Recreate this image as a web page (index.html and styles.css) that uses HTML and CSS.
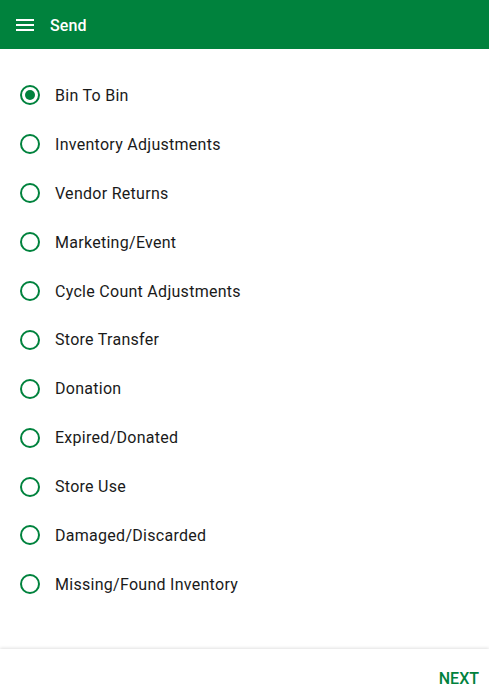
FILE: index.html
```html
<!DOCTYPE html>
<html>
  <head>
    <title>Send</title>
    <link rel="stylesheet" href="styles.css">
  </head>
  <body>
    <header class="toolbar">
      <svg class="menu_icon" width="18" height="12" viewBox="0 0 18 12">
        <rect x="0" y="0" width="18" height="2" fill="#fff"/>
        <rect x="0" y="5" width="18" height="2" fill="#fff"/>
        <rect x="0" y="10" width="18" height="2" fill="#fff"/>
      </svg>
      <span class="toolbar_title">Send</span>
    </header>

    <ul class="reasons">
      <li class="reason checked"><span class="radio"></span>Bin To Bin</li>
      <li class="reason"><span class="radio"></span>Inventory Adjustments</li>
      <li class="reason"><span class="radio"></span>Vendor Returns</li>
      <li class="reason"><span class="radio"></span>Marketing/Event</li>
      <li class="reason"><span class="radio"></span>Cycle Count Adjustments</li>
      <li class="reason"><span class="radio"></span>Store Transfer</li>
      <li class="reason"><span class="radio"></span>Donation</li>
      <li class="reason"><span class="radio"></span>Expired/Donated</li>
      <li class="reason"><span class="radio"></span>Store Use</li>
      <li class="reason"><span class="radio"></span>Damaged/Discarded</li>
      <li class="reason"><span class="radio"></span>Missing/Found Inventory</li>
    </ul>

    <footer class="bottom_bar">
      <button class="next_btn">Next</button>
    </footer>
  </body>
</html>
```

FILE: styles.css
```css
body { margin: 0; font-family: Roboto, "Noto Sans", sans-serif; background: #fff; height: 699px; position: relative; overflow: hidden; }

.toolbar { background: #00823d; height: 49px; display: flex; align-items: center; padding: 0 16px; box-sizing: border-box; }
.menu_icon { display: block; margin-top: 1px; }
.toolbar_title { color: #fff; font-size: 16px; font-weight: 500; letter-spacing: 0.15px; margin-left: 16px; margin-top: 1px; }

.reasons { list-style-type: none; margin: 0; padding: 22px 0 0 0; }
.reason { height: 48.9px; display: flex; align-items: center; padding-left: 20px; font-size: 16px; letter-spacing: 0.28px; color: #1a1a1a; }
.radio { width: 20px; height: 20px; box-sizing: border-box; border: 2px solid #00823d; border-radius: 50%; margin-right: 15px; display: flex; align-items: center; justify-content: center; }
.checked .radio::after { content: ""; width: 10px; height: 10px; border-radius: 50%; background: #00823d; }

.bottom_bar { position: absolute; left: 0; right: 0; bottom: 0; height: 50px; background: #fff; box-shadow: 0 -1px 3px rgba(0, 0, 0, 0.12); display: flex; justify-content: flex-end; align-items: center; padding: 0 10px; box-sizing: border-box; }
.next_btn { background: none; border: none; font-family: Roboto, sans-serif; font-size: 16px; font-weight: 500; color: #00823d; text-transform: uppercase; padding: 0; margin-top: 8px; }
```
